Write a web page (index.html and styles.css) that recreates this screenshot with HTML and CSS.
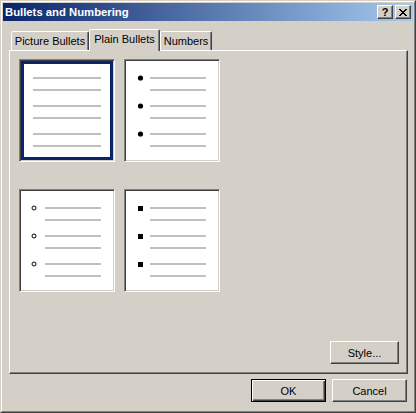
FILE: index.html
```html
<!DOCTYPE html>
<html>
<head>
<meta charset="utf-8">
<title>Bullets and Numbering</title>
<link rel="stylesheet" href="styles.css">
</head>
<body>
<div class="window">
  <div class="frame">
    <div class="titlebar">
      <span class="title">Bullets and Numbering</span>
      <div class="capbtns">
        <span class="capbtn help">?</span>
        <span class="capbtn close">
          <svg width="8" height="7" viewBox="0 0 8 7" shape-rendering="crispEdges"><path fill="#000" d="M0 0h2v1H0zM6 0h2v1H6zM1 1h2v1H1zM5 1h2v1H5zM2 2h4v1H2zM3 3h2v1H3zM2 4h4v1H2zM1 5h2v1H1zM5 5h2v1H5zM0 6h2v1H0zM6 6h2v1H6z"/></svg>
        </span>
      </div>
    </div>
    <div class="content">
      <div class="tabs">
        <div class="tab tab-picture">Picture Bullets</div>
        <div class="tab tab-plain active">Plain Bullets</div>
        <div class="tab tab-numbers">Numbers</div>
      </div>
      <div class="panel">
        <div class="grid">
          <div class="preview selected">
            <svg class="pv" width="92" height="99" viewBox="0 0 92 99" shape-rendering="crispEdges">
              <rect x="0" y="0" width="92" height="99" fill="none" stroke="#000" stroke-width="2"/>
              <rect x="1.5" y="1.5" width="89" height="96" fill="none" stroke="#0a246a" stroke-width="3"/>
              <g fill="#c0c0c0">
                <rect x="12" y="16" width="68" height="2"/>
                <rect x="12" y="28" width="68" height="2"/>
                <rect x="12" y="44" width="68" height="2"/>
                <rect x="12" y="56" width="68" height="2"/>
                <rect x="12" y="72" width="68" height="2"/>
                <rect x="12" y="84" width="68" height="2"/>
              </g>
            </svg>
          </div>
          <div class="preview">
            <svg class="pv" width="92" height="99" viewBox="0 0 92 99">
              <g fill="#c0c0c0" shape-rendering="crispEdges">
                <rect x="24" y="16" width="56" height="2"/>
                <rect x="24" y="28" width="56" height="2"/>
                <rect x="24" y="44" width="56" height="2"/>
                <rect x="24" y="56" width="56" height="2"/>
                <rect x="24" y="72" width="56" height="2"/>
                <rect x="24" y="84" width="56" height="2"/>
              </g>
              <g fill="#000">
                <circle cx="14.5" cy="17" r="2.6"/>
                <circle cx="14.5" cy="45" r="2.6"/>
                <circle cx="14.5" cy="73" r="2.6"/>
              </g>
            </svg>
          </div>
          <div class="preview">
            <svg class="pv" width="92" height="99" viewBox="0 0 92 99">
              <g fill="#c0c0c0" shape-rendering="crispEdges">
                <rect x="24" y="16" width="56" height="2"/>
                <rect x="24" y="28" width="56" height="2"/>
                <rect x="24" y="44" width="56" height="2"/>
                <rect x="24" y="56" width="56" height="2"/>
                <rect x="24" y="72" width="56" height="2"/>
                <rect x="24" y="84" width="56" height="2"/>
              </g>
              <g fill="none" stroke="#000" stroke-width="1">
                <circle cx="13" cy="17" r="2"/>
                <circle cx="13" cy="45" r="2"/>
                <circle cx="13" cy="73" r="2"/>
              </g>
            </svg>
          </div>
          <div class="preview">
            <svg class="pv" width="92" height="99" viewBox="0 0 92 99" shape-rendering="crispEdges">
              <g fill="#c0c0c0">
                <rect x="24" y="16" width="56" height="2"/>
                <rect x="24" y="28" width="56" height="2"/>
                <rect x="24" y="44" width="56" height="2"/>
                <rect x="24" y="56" width="56" height="2"/>
                <rect x="24" y="72" width="56" height="2"/>
                <rect x="24" y="84" width="56" height="2"/>
              </g>
              <g fill="#000">
                <rect x="12" y="15" width="5" height="5"/>
                <rect x="12" y="43" width="5" height="5"/>
                <rect x="12" y="71" width="5" height="5"/>
              </g>
            </svg>
          </div>
        </div>
        <div class="panel-foot">
          <button class="btn btn-style">Style...</button>
        </div>
      </div>
      <div class="footer">
        <button class="btn default">OK</button>
        <button class="btn">Cancel</button>
      </div>
    </div>
  </div>
</div>
</body>
</html>
```
FILE: styles.css
```css
* { box-sizing: border-box; }
html, body { margin: 0; padding: 0; }
body {
  width: 416px;
  height: 413px;
  overflow: hidden;
  background: #d4d0c8;
  font-family: "Liberation Sans", Arial, sans-serif;
  font-size: 11px;
  color: #000;
}
.window {
  width: 416px;
  height: 413px;
  background: #d4d0c8;
  border: 1px solid;
  border-color: #d4d0c8 #404040 #404040 #d4d0c8;
}
.frame {
  height: 100%;
  border: 1px solid;
  border-color: #fff #808080 #808080 #fff;
  padding: 1px;
  display: flex;
  flex-direction: column;
}
.titlebar {
  height: 18px;
  flex: none;
  background: linear-gradient(to right, #0a246a, #a6caf0);
  display: flex;
  align-items: center;
  justify-content: space-between;
  padding: 0 2px;
}
.title {
  color: #fff;
  font-weight: bold;
  font-size: 11.3px;
}
.capbtns { display: flex; gap: 2px; }
.capbtn {
  width: 16px;
  height: 14px;
  background: #d4d0c8;
  border: 1px solid;
  border-color: #fff #404040 #404040 #fff;
  box-shadow: inset -1px -1px #808080;
  display: flex;
  align-items: center;
  justify-content: center;
  font-weight: bold;
  font-size: 11px;
  line-height: 1;
}
.capbtn svg { display: block; }
.content {
  flex: 1;
  padding: 8px 5px 0 6px;
}
.tabs {
  height: 21px;
  display: flex;
  align-items: flex-end;
  padding-left: 2px;
}
.tab {
  height: 19px;
  background: #d4d0c8;
  border: 1px solid;
  border-bottom: none;
  border-color: #fff #404040 transparent #fff;
  box-shadow: inset -1px 0 #808080;
  border-radius: 2px 2px 0 0;
  text-align: center;
  line-height: 17px;
  padding-top: 1px;
  white-space: nowrap;
}
.tab-picture { width: 78px; }
.tab-plain { width: 71px; }
.tab-numbers { width: 52px; }
.tab.active {
  height: 22px;
  margin-bottom: -1px;
  position: relative;
  z-index: 1;
  line-height: 17px;
  padding-top: 1px;
}
.panel {
  height: 324px;
  border: 1px solid;
  border-color: #fff #404040 #404040 #fff;
  box-shadow: inset -1px -1px #808080;
  padding: 8px 8px 9px 9px;
  display: flex;
  flex-direction: column;
}
.grid {
  display: grid;
  grid-template-columns: 96px 96px;
  grid-template-rows: 103px 103px;
  column-gap: 9px;
  row-gap: 27px;
}
.preview {
  width: 96px;
  height: 103px;
  background: #fff;
  border: 1px solid;
  border-color: #808080 #fff #fff #808080;
  box-shadow: inset 1px 1px #404040, inset -1px -1px #d4d0c8;
  padding: 1px;
}
.pv { display: block; }
.panel-foot {
  margin-top: auto;
  display: flex;
  justify-content: flex-end;
}
.btn {
  width: 75px;
  height: 23px;
  padding: 0;
  margin: 0;
  background: #d4d0c8;
  border: 1px solid;
  border-color: #fff #404040 #404040 #fff;
  box-shadow: inset -1px -1px #808080;
  font-family: "Liberation Sans", Arial, sans-serif;
  font-size: 11px;
  color: #000;
}
.btn-style { width: 69px; }
.btn.default {
  border-color: #000;
  box-shadow: inset 1px 1px #fff, inset -1px -1px #404040, inset -2px -2px #808080;
}
.footer {
  margin-top: 5px;
  display: flex;
  justify-content: flex-end;
  gap: 6px;
  padding-right: 1px;
}
```
